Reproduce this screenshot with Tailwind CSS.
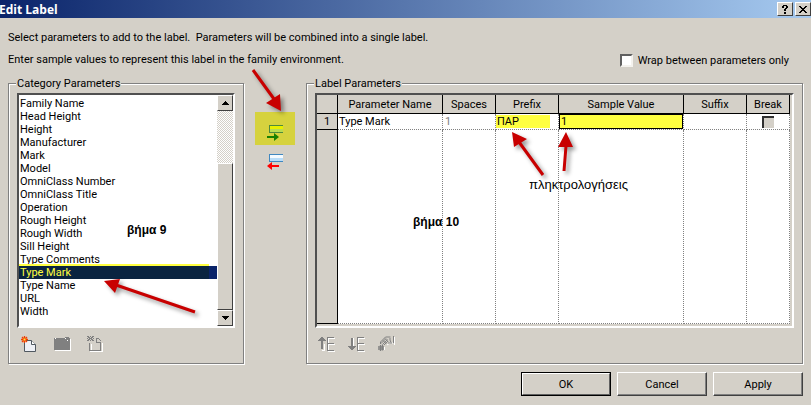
<!DOCTYPE html>
<html lang="en">
<head>
  <meta charset="UTF-8" />
  <meta name="viewport" content="width=device-width, initial-scale=1.0"/>
  <title>Edit Label</title>
  <script src="https://cdn.jsdelivr.net/npm/@tailwindcss/browser@4"></script>
</head>
<body class="relative min-h-screen flex flex-col bg-[#d4d0c8] text-black text-[11px] leading-[13px] font-['Roboto','Liberation_Sans',sans-serif] overflow-hidden">
  <!-- Title bar -->
  <header class="h-[18px] flex items-center justify-between bg-linear-to-r/srgb from-[#0a246a] to-[#a6caf0]">
    <h1 class="text-[12px] font-bold text-white -ml-px font-['Open_Sans',sans-serif]">Edit Label</h1>
    <div class="flex gap-0.5">
      <button type="button" aria-label="Help" class="w-4 h-[14px] flex items-center justify-center bg-[#d4d0c8] border border-t-white border-l-white border-r-[#404040] border-b-[#404040]">
        <svg class="w-2 h-[9px]" viewBox="0 0 8 9" shape-rendering="crispEdges"><path d="M1 1h1V0h4v1h1v2H6v1H5v2H3V4h1V3h1V1H3v2H1zM3 7h2v2H3z"/></svg>
      </button>
      <button type="button" aria-label="Close" class="w-4 h-[14px] flex items-center justify-center bg-[#d4d0c8] border border-t-white border-l-white border-r-[#404040] border-b-[#404040]">
        <svg class="w-2 h-[7px]" viewBox="0 0 8 7" shape-rendering="crispEdges"><path d="M0 0h2v1h1v1h2V1h1V0h2v1H7v1H6v1H5v1h1v1h1v1h1v1H6V6H5V5H3v1H2v1H0V6h1V5h1V4h1V3H2V2H1V1H0z"/></svg>
      </button>
    </div>
  </header>

  <main class="flex-1 flex flex-col px-2">
    <!-- Intro text -->
    <div class="flex justify-between items-end pt-[11px]">
      <div class="leading-[18px]">
        <p>Select parameters to add to the label.&nbsp; Parameters will be combined into a single label.</p>
        <p class="mt-1">Enter sample values to represent this label in the family environment.</p>
      </div>
      <label class="flex items-center gap-[5px] mr-[14px] h-[18px]">
        <input type="checkbox" class="appearance-none size-[13px] bg-white border-2 border-t-[#606060] border-l-[#606060] border-r-[#f4f2ee] border-b-[#f4f2ee]" />
        Wrap between parameters only
      </label>
    </div>

    <div class="flex mt-2 h-[287px]">
      <!-- Category parameters -->
      <fieldset class="w-[236px] flex flex-col px-2 border border-[#808080] shadow-[1px_1px_0_#fff,inset_1px_1px_0_#fff]">
        <legend class="px-px -ml-px bg-[#d4d0c8]">Category Parameters</legend>
        <div class="relative flex h-[235px] mt-[3px] border-2 border-t-[#505050] border-l-[#505050] border-r-white border-b-white bg-white">
          <select size="17" aria-label="Category Parameters" class="flex-1 appearance-none overflow-hidden outline-none pt-0.5 [&>option]:h-[13px] [&>option]:min-h-0 [&>option]:p-0 [&>option]:pl-px [&>option]:leading-[13px]">
            <option>Family Name</option>
            <option>Head Height</option>
            <option>Height</option>
            <option>Manufacturer</option>
            <option>Mark</option>
            <option>Model</option>
            <option>OmniClass Number</option>
            <option>OmniClass Title</option>
            <option>Operation</option>
            <option>Rough Height</option>
            <option>Rough Width</option>
            <option>Sill Height</option>
            <option>Type Comments</option>
            <option selected class="checked:text-[#ffff40] checked:bg-[linear-gradient(90deg,#0a2440_96%,#0a246a_96%)]">Type Mark</option>
            <option>Type Name</option>
            <option>URL</option>
            <option>Width</option>
          </select>
          <div class="absolute left-0 right-6 top-[169px] h-0.5 bg-[#ffff40]"></div>
          <!-- Scrollbar -->
          <div class="w-4 flex flex-col bg-[repeating-conic-gradient(#fff_0_25%,#d4d0c8_0_50%)] bg-[length:2px_2px]">
            <button type="button" aria-label="Scroll up" class="h-4 flex items-center justify-center bg-[#d4d0c8] border border-t-white border-l-white border-r-[#404040] border-b-[#404040]">
              <svg class="w-[7px] h-1" viewBox="0 0 7 4" shape-rendering="crispEdges"><path d="M3 0h1v1h1v1h1v1h1v1H0V3h1V2h1V1h1z"/></svg>
            </button>
            <div class="flex-1 mt-[52px] bg-[#d4d0c8] border border-t-white border-l-white border-r-[#404040] border-b-[#404040]"></div>
            <button type="button" aria-label="Scroll down" class="h-4 flex items-center justify-center bg-[#d4d0c8] border border-t-white border-l-white border-r-[#404040] border-b-[#404040]">
              <svg class="w-[7px] h-1" viewBox="0 0 7 4" shape-rendering="crispEdges"><path d="M0 0h7v1H6v1H5v1H4v1H3V3H2V2H1V1H0z"/></svg>
            </button>
          </div>
        </div>
        <div class="flex gap-4 mt-2 pl-1">
          <button type="button" aria-label="New parameter">
            <svg class="w-[17px] h-4" viewBox="0 0 17 16" fill="none">
              <path d="M3.500 4.500H10.500L14.500 8.500V15.500H3.500z" fill="#eef0f6" stroke="#505860"/>
              <path d="M10.500 4.500v4h4" fill="#fff" stroke="#505860"/>
              <path d="M3.500 0v7M0 3.500h7M1 1l5 5M6 1L1 6" stroke="#f04000" stroke-width="1.300"/>
              <path d="M2.500 2.500h2v2h-2z" fill="#ffe840"/>
            </svg>
          </button>
          <button type="button" aria-label="Edit parameter" disabled>
            <svg class="w-[17px] h-4" viewBox="0 0 17 16" shape-rendering="crispEdges">
              <path d="M1 3h16v12H1z" fill="#fff"/>
              <path d="M0 2h11V1h4v1h1v12H0z" fill="#808080"/>
              <path d="M1 2h1v1H1zM11 2h1v1h-1zM13 4h1v1h-1z" fill="#fff"/>
            </svg>
          </button>
          <button type="button" aria-label="Delete parameter" disabled>
            <svg class="w-[17px] h-4" viewBox="0 0 17 16" fill="none" shape-rendering="crispEdges">
              <path d="M4.500 8V14M3 15.500h12.500V6.500M9.500 5v1" stroke="#fff"/>
              <path d="M2.500 7v7.500h11V5.500M9.500 1.500v5h4M10 2.500h2M12 3.500h1M13 4.500h1" stroke="#808080"/>
              <path d="M0 .5h2m1 0h1m1 0h2M1 1.500h2m1 0h2M0 2.500h1m1 0h3m1 0h1M1 3.500h2m1 0h2M0 4.500h2m1 0h1m1 0h2" stroke="#808080"/>
            </svg>
          </button>
        </div>
      </fieldset>

      <!-- Add / remove buttons -->
      <div class="w-[62px] flex flex-col items-center pt-[35px] gap-[5px]">
        <button type="button" aria-label="Add parameter to label" class="w-10 h-[33px] mr-px flex items-end justify-center pb-1 bg-[#d6d23e]">
          <svg class="w-4 h-4" viewBox="0 0 16 16">
            <path d="M2 0h14v8H2z" fill="#4f8a3c"/>
            <path d="M3 1h13v6H3z" fill="#e8f000"/>
            <path d="M3 4h13v3H3z" fill="#b8dc50"/>
            <path d="M0 11h7V8l5 4-5 4v-3H0z" fill="#188000"/>
          </svg>
        </button>
        <button type="button" aria-label="Remove parameter from label" class="w-10 h-6 mr-px flex items-center justify-center">
          <svg class="w-4 h-4" viewBox="0 0 16 16">
            <path d="M2 0h14v8H2z" fill="#4088c0"/>
            <path d="M3 1h13v6H3z" fill="#f4faff"/>
            <path d="M3 4h13v3H3z" fill="#b8dcf8"/>
            <path d="M12 11H5V8l-5 4 5 4v-3h7z" fill="#f00"/>
          </svg>
        </button>
      </div>

      <!-- Label parameters -->
      <fieldset class="flex-1 min-w-0 flex flex-col px-2 border border-[#808080] shadow-[1px_1px_0_#fff,inset_1px_1px_0_#fff]">
        <legend class="px-px -ml-px bg-[#d4d0c8]">Label Parameters</legend>
        <div class="h-[235px] mt-[3px] pr-0.5 pb-0.5 border-2 border-t-[#505050] border-l-[#505050] border-r-white border-b-white bg-[#d4d0c8]">
          <table class="w-full h-full table-fixed border-separate border-spacing-0 bg-white text-left">
            <colgroup>
              <col class="w-[21px]" /><col class="w-[105px]" /><col class="w-[53px]" /><col class="w-[63px]" /><col /><col class="w-[63px]" /><col class="w-[43px]" />
            </colgroup>
            <thead>
              <tr class="h-[19px] bg-[#d4d0c8] text-center [&>th]:p-0 [&>th]:pt-px [&>th]:font-normal [&>th]:border-r [&>th]:border-b [&>th]:border-black">
                <th aria-label="Row"></th>
                <th scope="col">Parameter Name</th>
                <th scope="col">Spaces</th>
                <th scope="col">Prefix</th>
                <th scope="col">Sample Value</th>
                <th scope="col">Suffix</th>
                <th scope="col">Break</th>
              </tr>
            </thead>
            <tbody>
              <tr class="h-[15px] [&>td]:p-0 [&>td]:border-r [&>td]:border-b [&>td]:border-dotted [&>td]:border-[#808080]">
                <th scope="row" class="p-0 font-normal text-center bg-[#d4d0c8] border-r border-b border-black">1</th>
                <td><span class="pl-px">Type Mark</span></td>
                <td class="text-[#808080]"><span class="pl-0.5">1</span></td>
                <td><div class="mr-2 pl-px bg-[#ffff40]">ΠΑΡ</div></td>
                <td><div class="h-[15px] pl-px bg-[#ffff40] border border-black">1</div></td>
                <td></td>
                <td><input type="checkbox" aria-label="Break" disabled class="appearance-none block mx-auto size-3 bg-[#d4d0c8] border-t-2 border-l-2 border-[#303030]" /></td>
              </tr>
              <tr class="[&>td]:border-r [&>td]:border-b [&>td]:border-dotted [&>td]:border-[#808080]">
                <th class="bg-[#d4d0c8] border-r border-b border-black"></th>
                <td></td><td></td><td></td><td></td><td></td><td></td>
              </tr>
            </tbody>
          </table>
        </div>
        <div class="flex gap-[13px] mt-2 pl-[3px]">
          <button type="button" aria-label="Move parameter up" disabled>
            <svg class="w-[17px] h-4" viewBox="0 0 17 16" fill="none" shape-rendering="crispEdges">
              <path d="M6 8v6H4M10 15.500h7M10 2.500h7M10 8.500h7M10.500 2v13" stroke="#fff"/>
              <path d="M3 1h2v1h1v1h1v1h1v1H5v8H3V5H0V4h1V3h1V2h1z" fill="#808080"/>
              <path d="M16 1.500H9.500V14.500H16M9 7.500h7" stroke="#808080"/>
            </svg>
          </button>
          <button type="button" aria-label="Move parameter down" disabled>
            <svg class="w-[17px] h-4" viewBox="0 0 17 16" fill="none" shape-rendering="crispEdges">
              <path d="M5.500 2v8M10 15.500h7M10 2.500h7M10 8.500h7M10.500 2v13" stroke="#fff"/>
              <path d="M3 2h2v8h3v1H7v1H6v1H5v1H3v-1H2v-1H1v-1H0v-1h3z" fill="#808080"/>
              <path d="M16 1.500H9.500V14.500H16M9 7.500h7" stroke="#808080"/>
            </svg>
          </button>
          <button type="button" aria-label="Edit units format" disabled>
            <svg class="w-[17px] h-4" viewBox="0 0 17 16" fill="none">
              <path d="M4 9L9 4M9 9l3-2h3M16.500 1v8M6.500 11v3" stroke="#fff"/>
              <path d="M2.500 8V6l5-5h5M3 7.500l5-5M4.500 8.500l5-5M6 9l4-4M7 2.500l3 3M5 4.500l3 3M12 2v2l1 2.500M15.500 0v7M10 7h4" stroke="#808080"/>
              <path d="M2.500 9v6M4.500 8.500v6M0 11h6M0 13h6" stroke="#808080" stroke-width="1.300"/>
            </svg>
          </button>
        </div>
      </fieldset>
    </div>

    <!-- Dialog buttons -->
    <div class="flex justify-end gap-[6px] mt-2 mb-2">
      <button type="button" class="w-[90px] h-6 border border-black"><span class="flex h-full items-center justify-center border border-t-white border-l-white border-r-[#606060] border-b-[#606060]">OK</span></button>
      <button type="button" class="w-[90px] h-6 border border-t-white border-l-white border-r-[#404040] border-b-[#404040] shadow-[inset_-1px_-1px_0_#808080]">Cancel</button>
      <button type="button" class="w-[90px] h-6 border border-t-white border-l-white border-r-[#404040] border-b-[#404040] shadow-[inset_-1px_-1px_0_#808080]">Apply</button>
    </div>
  </main>

  <!-- Annotations drawn over the dialog -->
  <svg class="absolute left-0 top-0 w-[811px] h-[405px] pointer-events-none drop-shadow-[3px_3px_2px_rgb(0_0_0/0.4)]" viewBox="0 0 811 405" fill="#c80000" stroke="#c80000" aria-hidden="true">
    <path d="M253 70L274 99M195 312L116 285M543 175L519 142M564 171L566 146" stroke-width="3"/>
    <path d="M281 111L266 103L280 94zM104 281L120 279L115 293zM512 132L514 147L527 139zM566 132L558 147L573 147z" stroke="none"/>
  </svg>
  <div class="font-['Liberation_Sans',sans-serif] text-[12px] leading-4" lang="el">
    <p class="absolute left-[127px] top-[222px] font-bold">βήμα 9</p>
    <p class="absolute left-[413px] top-[214px] font-bold">βήμα 10</p>
    <p class="absolute left-[529px] top-[177px] text-[13px]">πληκτρολογήσεις</p>
  </div>
</body>
</html>
